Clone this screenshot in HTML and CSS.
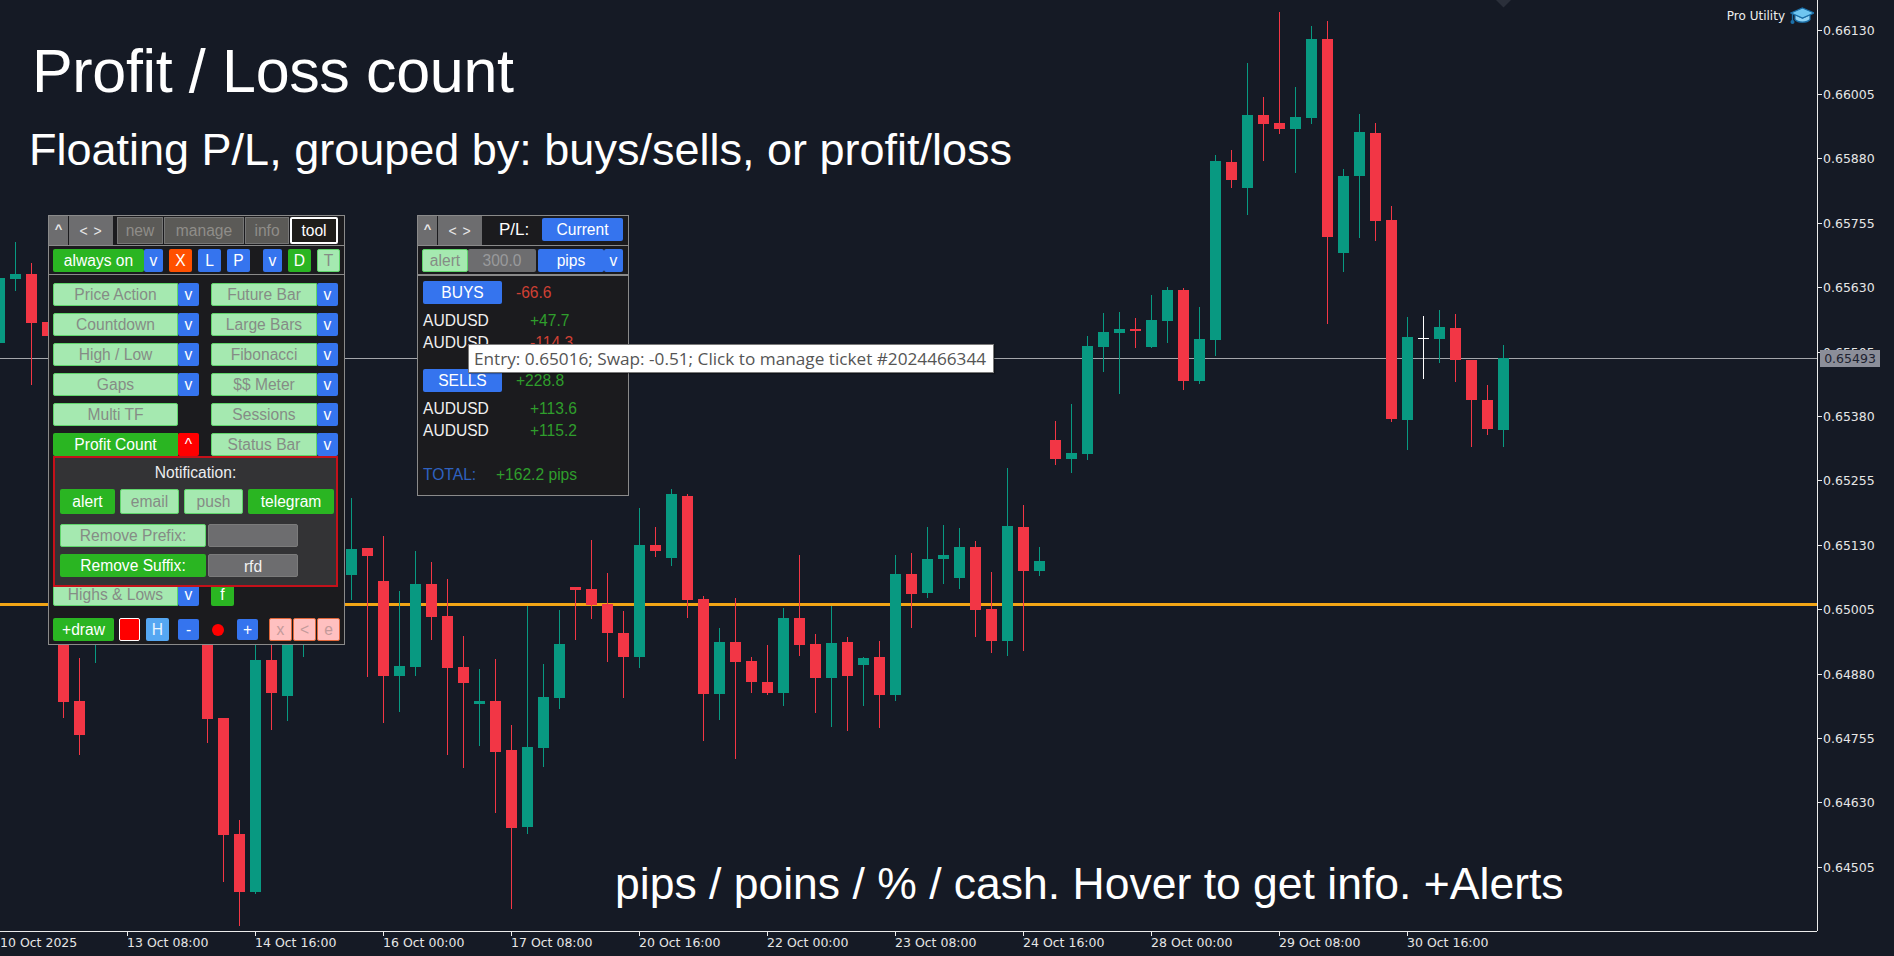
FILE: index.html
```html
<!DOCTYPE html>
<html lang="en">
<head>
<meta charset="utf-8">
<title>Profit / Loss count</title>
<link rel="stylesheet" href="styles.css">
</head>
<body>
<div class="terminal">
  <main class="plot">
    <svg class="chart" width="1817" height="931" viewBox="0 0 1817 931" aria-hidden="true">
      <path class="line-grey" d="M0 358.5H1817"/>
      <path class="line-orange" d="M0 604.5H1817"/>
      <path class="marker" d="M1496 0H1511L1503.5 7.5Z"/>
      <path class="wick up" d="M15.5 242V291M95.5 640V663M255.5 640V894M287.5 640V721M303.5 640V657M351.5 498V600M399.5 591V712M415.5 551V676M479.5 669V746M527.5 606V834M543.5 664V767M559.5 610V709M639.5 508V668M671.5 489V566M719.5 628V720M783.5 608V706M831.5 606V727M863.5 657V706M895.5 555V701M927.5 527V598M943.5 525V584M959.5 528V589M1007.5 468V656M1039.5 547V576M1071.5 404V473M1087.5 336V460M1103.5 313V372M1119.5 312V394M1151.5 295V348M1167.5 287V343M1199.5 307V384M1215.5 155V356M1247.5 63V215M1295.5 87V173M1311.5 26V124M1343.5 169V272M1359.5 114V238M1407.5 317V450M1439.5 310V363M1503.5 345V447"/>
      <path class="body up" d="M-0.5 278V343M15.5 274V279M255.5 660V892M287.5 640V696M351.5 549V575M399.5 666V676M415.5 584V667M479.5 701V704M527.5 747V827M543.5 697V748M559.5 644V698M639.5 545V657M671.5 494V558M719.5 642V694M783.5 618V693M831.5 643V678M863.5 658V665M895.5 574V695M927.5 559V593M943.5 555V559M959.5 547V578M1007.5 526V641M1039.5 561V571M1071.5 453V459M1087.5 346V454M1103.5 332V347M1119.5 329V333M1151.5 320V347M1167.5 290V321M1199.5 339V381M1215.5 161V340M1247.5 115V188M1295.5 117V129M1311.5 39V118M1343.5 176V253M1359.5 132V176M1407.5 337V420M1439.5 327V339M1503.5 358V430"/>
      <path class="wick down" d="M31.5 263V385M63.5 640V718M79.5 658V755M207.5 640V743M223.5 718V882M239.5 820V926M271.5 640V730M367.5 548V677M383.5 536V723M431.5 562V640M447.5 579V755M463.5 636V768M495.5 659V813M511.5 725V909M575.5 587V640M591.5 540V619M607.5 573V662M623.5 611V698M655.5 527V557M687.5 494V618M703.5 596V741M735.5 598V759M751.5 657V693M767.5 645V695M799.5 555V656M815.5 634V713M847.5 637V731M879.5 641V728M911.5 553V628M975.5 541V637M991.5 572V653M1023.5 505V651M1055.5 421V465M1135.5 318V348M1183.5 288V390M1231.5 150V188M1263.5 97V161M1279.5 12V134M1327.5 21V324M1375.5 123V241M1391.5 206V422M1455.5 314V382M1471.5 360V447M1487.5 385V435"/>
      <path class="body down" d="M31.5 274V323M47.5 322V336M63.5 640V702M79.5 701V735M207.5 640V719M223.5 718V835M239.5 834V892M271.5 660V693M367.5 548V556M383.5 581V676M431.5 584V617M447.5 616V668M463.5 667V683M495.5 701V752M511.5 750V828M575.5 587V590M591.5 589V605M607.5 604V633M623.5 633V657M655.5 545V551M687.5 496V600M703.5 599V694M735.5 642V662M751.5 661V682M767.5 682V693M799.5 618V645M815.5 644V678M847.5 642V676M879.5 657V695M911.5 574V594M975.5 547V610M991.5 609V641M1023.5 527V571M1055.5 440V459M1135.5 329V331M1183.5 290V381M1231.5 162V180M1263.5 115V124M1279.5 123V129M1327.5 39V237M1375.5 133V221M1391.5 220V419M1455.5 328V360M1471.5 360V400M1487.5 400V429"/>
      <path class="cross" d="M1423.5 316V379M1418 338.5H1429"/>
    </svg>

    <h1 class="title">Profit / Loss count</h1>
    <h2 class="subtitle">Floating P/L, grouped by: buys/sells, or profit/loss</h2>
    <p class="caption">pips / poins / % / cash. Hover to get info. +Alerts</p>

    <div class="brand">
      <span>Pro Utility</span>
      <svg class="brand-icon" width="24" height="18" viewBox="0 0 24 18" aria-hidden="true">
        <path d="M5 7.5V12.5C8 16 17 16 20 12.5V7.5L12.5 11Z" fill="#8fd3f4" stroke="#1b6fa8" stroke-width="1.2"/>
        <path d="M12.5 1L24 6L12.5 11L1 6Z" fill="#6fc6f0" stroke="#1b6fa8" stroke-width="1.2"/>
        <path d="M2.5 7V14" stroke="#1b6fa8" stroke-width="1.4"/>
        <circle cx="2.5" cy="15" r="2" fill="#1b6fa8"/>
      </svg>
    </div>

    <section class="panel panel-tools">
      <div class="bar">
        <button class="ctl ctl-up">^</button>
        <button class="ctl ctl-move">&lt; &gt;</button>
        <div class="tabs">
          <button class="tab tab-new">new</button>
          <button class="tab tab-manage">manage</button>
          <button class="tab tab-info">info</button>
          <button class="tab tab-tool">tool</button>
        </div>
      </div>
      <div class="bar-strip">
        <button class="btn on w-always">always on</button>
        <button class="btn blue w-v19">v</button>
        <button class="btn orange w-sq m-6">X</button>
        <button class="btn blue w-sq m-6">L</button>
        <button class="btn blue w-sq m-6">P</button>
        <button class="btn blue w-v19 m-13">v</button>
        <button class="btn on w-sq m-6">D</button>
        <button class="btn off w-sq m-6">T</button>
      </div>
      <div class="tools">
        <div class="cell"><button class="btn off grow">Price Action</button><button class="btn blue w-v21">v</button></div>
        <div class="cell"><button class="btn off grow">Future Bar</button><button class="btn blue w-v21">v</button></div>
        <div class="cell"><button class="btn off grow">Countdown</button><button class="btn blue w-v21">v</button></div>
        <div class="cell"><button class="btn off grow">Large Bars</button><button class="btn blue w-v21">v</button></div>
        <div class="cell"><button class="btn off grow">High / Low</button><button class="btn blue w-v21">v</button></div>
        <div class="cell"><button class="btn off grow">Fibonacci</button><button class="btn blue w-v21">v</button></div>
        <div class="cell"><button class="btn off grow">Gaps</button><button class="btn blue w-v21">v</button></div>
        <div class="cell"><button class="btn off grow">$$ Meter</button><button class="btn blue w-v21">v</button></div>
        <div class="cell"><button class="btn off w-multi">Multi TF</button></div>
        <div class="cell"><button class="btn off grow">Sessions</button><button class="btn blue w-v21">v</button></div>
        <div class="cell"><button class="btn on grow">Profit Count</button><button class="btn red w-v21">^</button></div>
        <div class="cell"><button class="btn off grow">Status Bar</button><button class="btn blue w-v21">v</button></div>
        <div class="notify">
          <div class="notify-title">Notification:</div>
          <div class="notify-row">
            <button class="btn on w-alert">alert</button>
            <button class="btn off w-email">email</button>
            <button class="btn off w-email">push</button>
            <button class="btn on w-telegram">telegram</button>
          </div>
          <div class="filter-row">
            <button class="btn off w-filter">Remove Prefix:</button>
            <div class="field"></div>
          </div>
          <div class="filter-row">
            <button class="btn on w-filter">Remove Suffix:</button>
            <div class="field">rfd</div>
          </div>
        </div>
        <div class="cell"><button class="btn off grow">Highs &amp; Lows</button><button class="btn blue w-v21">v</button></div>
        <div class="cell"><button class="btn on w-sq">f</button></div>
      </div>
      <div class="draw-row">
        <button class="btn on w-draw">+draw</button>
        <span class="swatch"></span>
        <button class="btn sky w-sq">H</button>
        <button class="btn blue w-step m-9">-</button>
        <span class="dot"></span>
        <button class="btn blue w-step">+</button>
        <button class="btn pink w-sq m-11">x</button>
        <button class="btn pink w-sq m-1">&lt;</button>
        <button class="btn pink w-sq m-1">e</button>
      </div>
    </section>

    <section class="panel panel-pl">
      <div class="bar">
        <button class="ctl ctl-up">^</button>
        <button class="ctl ctl-move">&lt; &gt;</button>
        <span class="pl-label">P/L:</span>
        <button class="btn blue w-current">Current</button>
      </div>
      <div class="bar-strip strip-pl">
        <button class="btn off w-plalert">alert</button>
        <div class="value-box">300.0</div>
        <button class="btn blue w-pips">pips</button>
        <button class="btn blue w-v19">v</button>
      </div>
      <div class="pl-body">
        <div class="group"><button class="btn blue w-group">BUYS</button><span class="loss">-66.6</span></div>
        <div class="trades">
          <div class="trade"><span class="sym">AUDUSD</span><span class="gain">+47.7</span></div>
          <div class="trade"><span class="sym">AUDUSD</span><span class="loss">-114.3</span></div>
        </div>
        <div class="group group-sells"><button class="btn blue w-group">SELLS</button><span class="gain">+228.8</span></div>
        <div class="trades">
          <div class="trade"><span class="sym">AUDUSD</span><span class="gain">+113.6</span></div>
          <div class="trade"><span class="sym">AUDUSD</span><span class="gain">+115.2</span></div>
        </div>
        <div class="total"><span class="total-label">TOTAL:</span><span class="gain">+162.2 pips</span></div>
      </div>
    </section>

    <div class="tooltip">Entry: 0.65016; Swap: -0.51; Click to manage ticket #2024466344</div>
  </main>

  <aside class="price-axis">
    <ul class="prices">
      <li>0.66130</li><li>0.66005</li><li>0.65880</li><li>0.65755</li><li>0.65630</li><li>0.65505</li><li>0.65380</li>
      <li>0.65255</li><li>0.65130</li><li>0.65005</li><li>0.64880</li><li>0.64755</li><li>0.64630</li><li>0.64505</li>
    </ul>
    <div class="price-now">0.65493</div>
  </aside>

  <footer class="time-axis">
    <span class="time time-first">10 Oct 2025</span>
    <span class="time">13 Oct 08:00</span>
    <span class="time">14 Oct 16:00</span>
    <span class="time">16 Oct 00:00</span>
    <span class="time">17 Oct 08:00</span>
    <span class="time">20 Oct 16:00</span>
    <span class="time">22 Oct 00:00</span>
    <span class="time">23 Oct 08:00</span>
    <span class="time">24 Oct 16:00</span>
    <span class="time">28 Oct 00:00</span>
    <span class="time">29 Oct 08:00</span>
    <span class="time">30 Oct 16:00</span>
  </footer>
</div>
</body>
</html>
```
FILE: styles.css
```css
* { box-sizing: border-box; }
html, body { margin: 0; padding: 0; }
body { background: #151a25; font-family: "Liberation Sans", Arial, sans-serif; overflow: hidden; }

.terminal {
  width: 1894px; height: 956px; display: grid;
  grid-template-columns: 1817px 77px; grid-template-rows: 931px 25px;
  background: #151a25; color: #e6e6e6;
}
.plot { position: relative; overflow: hidden; }
.chart { position: absolute; left: 0; top: 0; display: block; }
.chart path { fill: none; }
.line-grey { stroke: #a4a6ab; stroke-width: 1; }
.line-orange { stroke: #f2a516; stroke-width: 3; }
.chart .marker { fill: #2a2f3a; }
.wick { stroke-width: 1; shape-rendering: crispEdges; }
.body { stroke-width: 11; shape-rendering: crispEdges; }
.up { stroke: #089981; }
.down { stroke: #f23645; }
.cross { stroke: #fff; stroke-width: 1; shape-rendering: crispEdges; }

.title, .subtitle, .caption {
  position: absolute; margin: 0; color: #fff; white-space: nowrap;
  font-family: "Liberation Sans", Arial, sans-serif; font-weight: 400;
}
.title { left: 32px; top: 34px; font-size: 61px; line-height: 74px; letter-spacing: -0.35px; }
.subtitle { left: 29px; top: 124px; font-size: 45px; line-height: 52px; }
.caption { left: 615px; top: 858px; font-size: 44.5px; line-height: 52px; }

.brand {
  position: absolute; right: 3px; top: 7px; display: flex; align-items: center; gap: 5px;
  font-family: "DejaVu Sans", sans-serif; font-size: 12px; color: #eee; line-height: 18px;
}

.panel {
  position: absolute; border: 1px solid #8a8a8a; background: #1b1b1e;
  display: flex; flex-direction: column;
}
.panel-tools { left: 48px; top: 215px; width: 297px; height: 430px; }
.panel-pl { left: 417px; top: 215px; width: 212px; height: 281px; }

button { font-family: inherit; margin: 0; padding: 0; cursor: pointer; }

.bar { height: 30px; display: flex; border-bottom: 1px solid #8a8a8a; flex: none; }
.ctl { border: 0; background: #6d6d6f; color: #e8e8e8; height: 29px; font-size: 14px; }
.ctl-up { width: 19px; font-weight: 700; font-size: 13px; padding-bottom: 4px; margin-right: 1px; }
.ctl-move { width: 44px; letter-spacing: 1px; }
.tabs { display: flex; gap: 1px; margin-left: 4px; padding-top: 1px; height: 28px; }
.tab {
  height: 27px; background: #5b5a57; border: 1px solid #767676; color: #8f8d89;
  font-size: 15.6px;
}
.tab-new { width: 46px; }
.tab-manage { width: 80px; }
.tab-info { width: 44px; }
.tab-tool { width: 48px; background: #1f1d1a; border: 2px solid #fff; border-radius: 2px; color: #fff; }

.bar-strip {
  height: 29px; padding: 3px 0 0 4px; display: flex; border-bottom: 1px solid #8a8a8a; flex: none;
}
.btn {
  height: 23px; display: flex; align-items: center; justify-content: center; flex: none;
  font-size: 15.6px; line-height: 1; border: 0; border-radius: 2px; color: #fff; white-space: nowrap;
}
.on { background: #2ab522; }
.blue { background: #3574ee; }
.orange { background: #ff5000; }
.red { background: #ff0000; border-radius: 2px; }
.sky { background: #55a7f2; color: #e8f4ff; }
.off { background: #a5e9b0; border: 1px solid #5fd56b; color: #858c86; }
.pink { background: #ffc0c0; border: 1px solid #e2683a; color: #c49a9a; }

.w-always { width: 91px; }
.w-v19 { width: 19px; }
.w-v21 { width: 21px; }
.w-sq { width: 23px; }
.m-1 { margin-left: 1px; }
.m-6 { margin-left: 6px; }
.m-9 { margin-left: 9px; }
.m-11 { margin-left: 11px; }
.m-13 { margin-left: 13px; }

.tools {
  display: grid; grid-template-columns: 146px 127px; column-gap: 12px; row-gap: 7px;
  padding: 8px 0 0 4px; flex: none;
}
.cell { display: flex; height: 23px; }
.grow { flex: 1; border-radius: 2px 0 0 2px; min-width: 0; }
.w-multi { width: 125px; }

.notify {
  grid-column: 1 / -1; position: relative; z-index: 1;
  margin: -7px 0 -11px; height: 131px;
  background: #333335; border: 2px solid #c4111a; padding: 0 5px;
}
.notify-title { height: 31px; line-height: 30px; text-align: center; font-size: 15.6px; color: #ecedf0; }
.notify-row { display: flex; height: 25px; margin-bottom: 10px; }
.notify-row .btn { height: 25px; }
.w-alert { width: 55px; }
.w-email { width: 59px; margin-left: 5px; }
.w-telegram { width: 86px; margin-left: 5px; }
.filter-row { display: flex; gap: 2px; margin-bottom: 7px; height: 23px; }
.w-filter { width: 146px; }
.field {
  width: 90px; height: 23px; background: #6d6d6f; border: 1px solid #7b7b7b; border-radius: 2px;
  color: #f2f2f2; font-size: 15.6px; line-height: 23px; text-align: center;
}

.draw-row { display: flex; align-items: center; margin-top: 12px; padding-left: 4px; height: 23px; }
.w-draw { width: 61px; }
.swatch { width: 21px; height: 23px; margin: 0 6px 0 5px; background: #f00; border: 1px solid #fff; border-radius: 2px; flex: none; }
.w-step { width: 21px; height: 21px; }
.dot { width: 12px; height: 12px; margin: 0 13px; background: #f00; border-radius: 50%; flex: none; }

.pl-label { margin-left: 17px; width: 43px; font-size: 17px; line-height: 28px; color: #fff; }
.panel-pl .bar { align-items: flex-start; }
.w-current { width: 81px; margin-top: 2px; }
.strip-pl { border-bottom: 2px solid #8a8a8a; height: 30px; }
.w-plalert { width: 46px; }
.value-box {
  width: 68px; height: 23px; background: #6d6d6f; color: #999a9c; font-size: 15.6px; line-height: 24px;
  text-align: center; border-radius: 2px; flex: none; margin-right: 2px;
}
.w-pips { width: 66px; }

.pl-body { padding: 5px 0 0 5px; font-size: 15.6px; line-height: 22px; }
.group { display: flex; align-items: center; gap: 14px; height: 23px; }
.group-sells { margin-top: 15px; }
.w-group { width: 79px; }
.trades { padding-top: 6px; }
.trade { height: 22px; display: flex; }
.sym { width: 107px; color: #f0f0f0; }
.gain { color: #2f9e2c; }
.loss { color: #cf4034; }
.total { display: flex; margin-top: 22px; height: 22px; }
.total-label { width: 73px; color: #2f62c0; }

.tooltip {
  position: absolute; left: 468px; top: 344px; width: 526px; height: 29px;
  background: #fff; border: 1px solid #7a7a7a; color: #555;
  font-family: "Open Sans", sans-serif; font-size: 17.2px; line-height: 27px; padding-left: 5px; white-space: nowrap;
  box-shadow: 1px 1px 1px rgba(0,0,0,.3);
}

.price-axis { position: relative; border-left: 1px solid #ececec; overflow: hidden; font-family: "DejaVu Sans", sans-serif; font-size: 12.5px; }
.prices { list-style: none; margin: -2px 0 0; padding: 0; }
.prices li { height: 64.4px; display: flex; align-items: center; gap: 1px; color: #e6e6e6; }
.prices li::before { content: ""; width: 4px; height: 1px; background: #ececec; }
.price-now {
  position: absolute; left: 2px; top: 350px; width: 60px; height: 17px; background: #8b8e99; color: #1d2230;
  text-align: center; line-height: 17px;
}

.time-axis {
  grid-column: 1 / -1; width: 1817px; border-top: 1px solid #ececec; display: flex;
  font-family: "DejaVu Sans", sans-serif; font-size: 12.5px;
}
.time { width: 128px; flex: none; display: flex; flex-direction: column; color: #e6e6e6; white-space: nowrap; line-height: 15px; }
.time::before { content: ""; width: 1px; height: 4px; background: #ececec; margin-bottom: -1px; }
.time-first { width: 127px; }
.time-first::before { background: transparent; }
```
